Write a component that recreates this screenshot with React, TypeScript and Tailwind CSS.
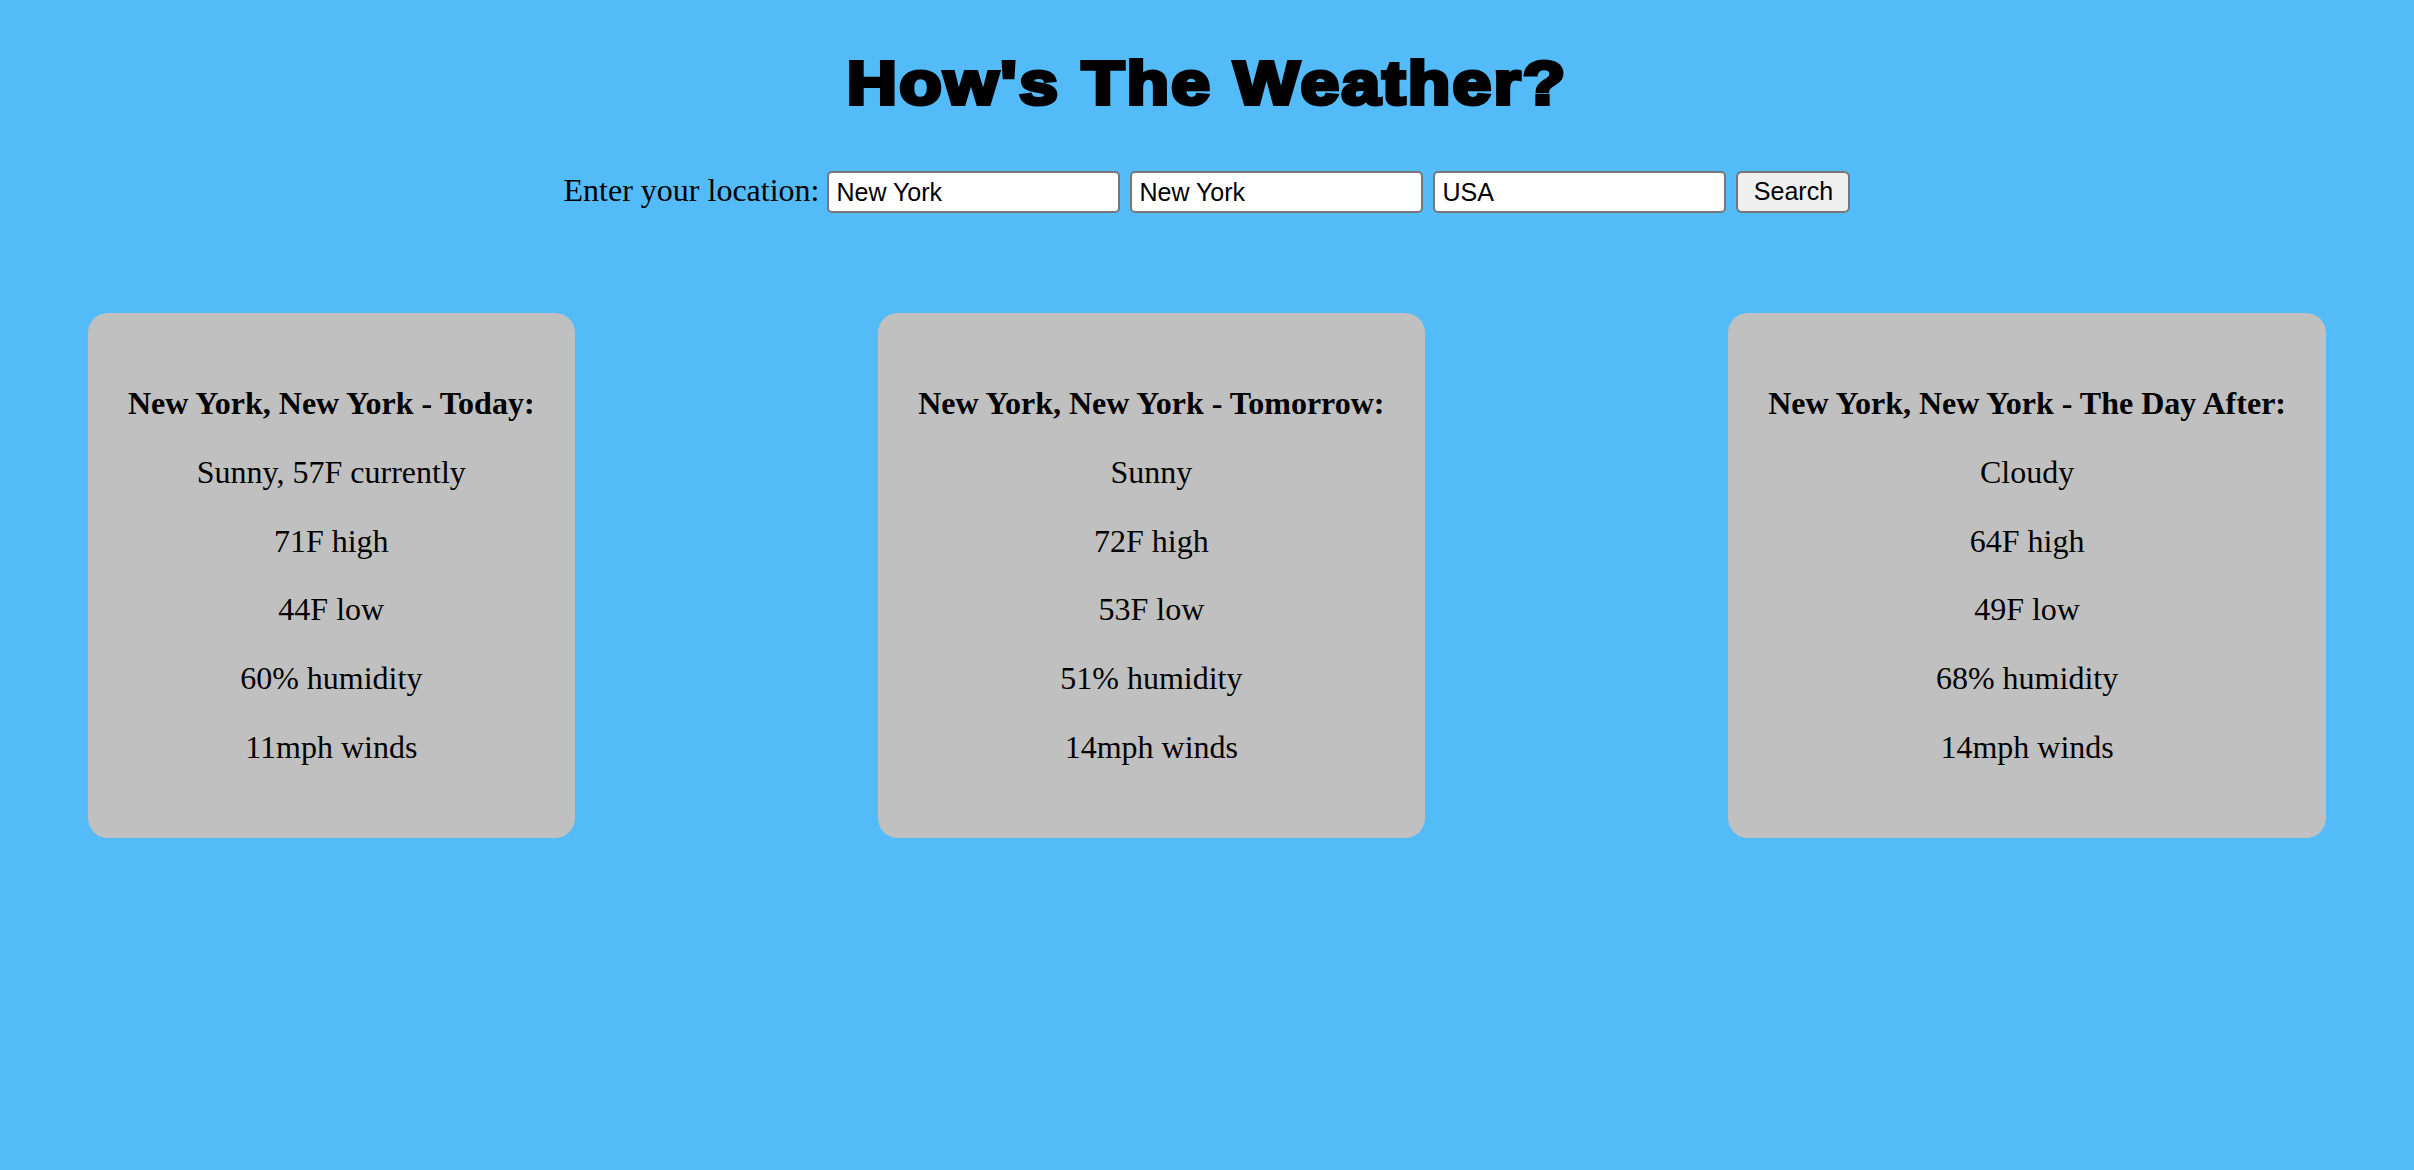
import React from 'react';

type Forecast = {
  title: string;
  lines: string[];
};

const forecasts: Forecast[] = [
  {
    title: 'New York, New York - Today:',
    lines: ['Sunny, 57F currently', '71F high', '44F low', '60% humidity', '11mph winds'],
  },
  {
    title: 'New York, New York - Tomorrow:',
    lines: ['Sunny', '72F high', '53F low', '51% humidity', '14mph winds'],
  },
  {
    title: 'New York, New York - The Day After:',
    lines: ['Cloudy', '64F high', '49F low', '68% humidity', '14mph winds'],
  },
];

function ForecastCard({ forecast }: { forecast: Forecast }) {
  return (
    <div className="bg-[#c0c0c0] rounded-[20px] px-[40px] py-[40px] text-center text-black">
      <p className="my-[32px] font-bold leading-[36.8px]">{forecast.title}</p>
      {forecast.lines.map((line) => (
        <p key={line} className="my-[32px] leading-[36.8px]">
          {line}
        </p>
      ))}
    </div>
  );
}

export default function App() {
  return (
    <div
      className="min-h-[1170px] w-full bg-[#54bbf9] text-[32px] text-black overflow-hidden"
      style={{ fontFamily: '"Liberation Serif", "Times New Roman", serif' }}
    >
      {/* Header - heavy black sans, stroked to get the Arial Black weight */}
      <h1
        className="pt-[53px] text-center text-[61px] font-bold leading-[61px]"
        style={{ fontFamily: '"Liberation Sans", Arial, sans-serif' }}
      >
        <span className="inline-block scale-x-[1.14] tracking-[2px] [-webkit-text-stroke:4px_black]">
          How's The Weather?
        </span>
      </h1>

      {/* Location search */}
      <div className="mt-[57px] flex h-[42px] items-center justify-center gap-[10px]">
        <span className="mb-[4px] mr-[-2px] leading-[37px]">Enter your location:</span>
        {['New York', 'New York', 'USA'].map((value, i) => (
          <input
            key={i}
            type="text"
            defaultValue={value}
            className="h-[42px] w-[293px] rounded-[5px] border-2 border-[#767676] bg-white pl-[7px] text-[25px] text-black outline-none"
            style={{ fontFamily: '"Liberation Sans", Arial, sans-serif' }}
          />
        ))}
        <button
          className="h-[42px] w-[114px] rounded-[6px] border-2 border-[#767676] bg-[#efefef] text-center text-[25px] text-black"
          style={{ fontFamily: '"Liberation Sans", Arial, sans-serif' }}
        >
          Search
        </button>
      </div>

      {/* Forecast cards */}
      <div className="mt-[100px] flex items-start justify-between px-[88px]">
        {forecasts.map((f) => (
          <ForecastCard key={f.title} forecast={f} />
        ))}
      </div>
    </div>
  );
}
